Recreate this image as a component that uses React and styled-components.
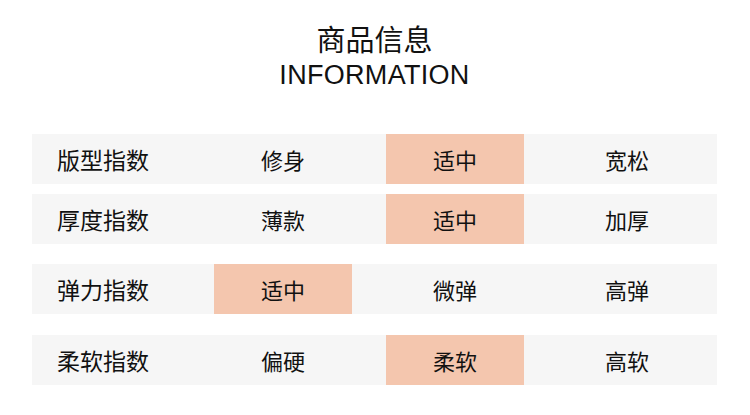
import styled, { createGlobalStyle } from "styled-components"

const GlobalStyle = createGlobalStyle`
    body {
        margin: 0;
        background: #FFFFFF;
        font-family: "Liberation Sans", "Noto Sans CJK SC", sans-serif;
    }
`

const StyledPage = styled.section`
    width: 750px;
    height: 415px;
    padding: 19px 33px 0 32px;
    box-sizing: border-box;
    overflow: hidden;
`
const StyledHeader = styled.header`
    display: flex;
    flex-direction: column;
    align-items: center;
    margin-bottom: 42px;
`
const StyledTitle = styled.h2`
    margin: 0;
    font-family: "Noto Sans CJK SC", sans-serif;
    font-size: 29px;
    font-weight: 400;
    line-height: 39px;
    color: #111;
`
const StyledSubTitle = styled.p`
    margin: 0;
    font-family: "Liberation Sans", Arial, sans-serif;
    font-size: 27px;
    letter-spacing: 0.3px;
    line-height: 34px;
    color: #111;
`
const StyledTable = styled.div`
    display: flex;
    flex-direction: column;
`
const StyledRow = styled.div`
    display: grid;
    grid-template-columns: 148px 138px 138px 138px;
    column-gap: 34px;
    height: 50px;
    background: #f6f6f6;
    margin-top: ${({ $gap }) => $gap}px;
`
const StyledLabel = styled.div`
    display: flex;
    align-items: center;
    padding-left: 25px;
    font-family: "Noto Sans CJK SC", sans-serif;
    font-size: 23px;
    color: #111;
    white-space: nowrap;
`
const StyledCell = styled.div`
    display: flex;
    align-items: center;
    justify-content: center;
    font-family: "Noto Sans CJK SC", sans-serif;
    font-size: 22px;
    color: #111;
    background: ${({ $active }) => ($active ? "#f4c6ae" : "transparent")};
`

const rows = [
    { label: "版型指数", options: ["修身", "适中", "宽松"], active: 1, gap: 0 },
    { label: "厚度指数", options: ["薄款", "适中", "加厚"], active: 1, gap: 10 },
    { label: "弹力指数", options: ["适中", "微弹", "高弹"], active: 0, gap: 20 },
    { label: "柔软指数", options: ["偏硬", "柔软", "高软"], active: 1, gap: 21 },
]

const App = () => {
    return (
        <>
            <GlobalStyle />
            <StyledPage>
                <StyledHeader>
                    <StyledTitle>商品信息</StyledTitle>
                    <StyledSubTitle>INFORMATION</StyledSubTitle>
                </StyledHeader>
                <StyledTable>
                    {rows.map((row) => (
                        <StyledRow key={row.label} $gap={row.gap}>
                            <StyledLabel>{row.label}</StyledLabel>
                            {row.options.map((option, i) => (
                                <StyledCell key={option + i} $active={i === row.active}>
                                    {option}
                                </StyledCell>
                            ))}
                        </StyledRow>
                    ))}
                </StyledTable>
            </StyledPage>
        </>
    )
}

export default App
